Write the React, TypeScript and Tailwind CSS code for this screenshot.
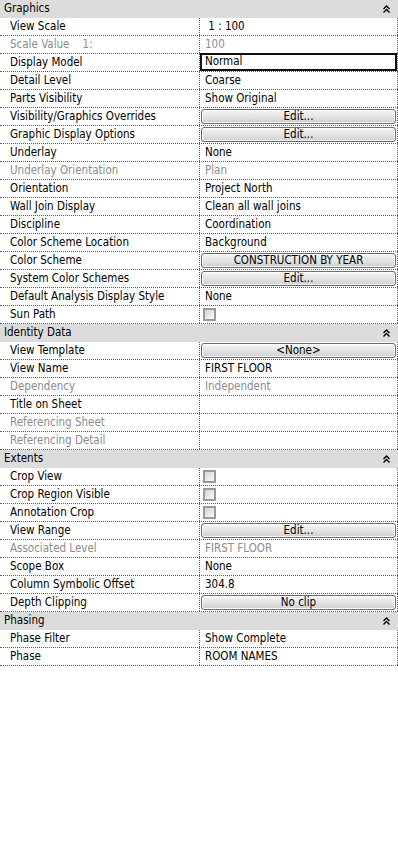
import { JSX } from "react";

type Row = {
  label: string;
  value?: string;
  kind?: "text" | "button" | "check" | "edit";
  disabled?: boolean;
};

type Section = { title: string; rows: Row[] };

const sections: Section[] = [
  {
    title: "Graphics",
    rows: [
      { label: "View Scale", value: " 1 : 100" },
      { label: "Scale Value    1:", value: "100", disabled: true },
      { label: "Display Model", value: "Normal", kind: "edit" },
      { label: "Detail Level", value: "Coarse" },
      { label: "Parts Visibility", value: "Show Original" },
      { label: "Visibility/Graphics Overrides", value: "Edit...", kind: "button" },
      { label: "Graphic Display Options", value: "Edit...", kind: "button" },
      { label: "Underlay", value: "None" },
      { label: "Underlay Orientation", value: "Plan", disabled: true },
      { label: "Orientation", value: "Project North" },
      { label: "Wall Join Display", value: "Clean all wall joins" },
      { label: "Discipline", value: "Coordination" },
      { label: "Color Scheme Location", value: "Background" },
      { label: "Color Scheme", value: "CONSTRUCTION BY YEAR", kind: "button" },
      { label: "System Color Schemes", value: "Edit...", kind: "button" },
      { label: "Default Analysis Display Style", value: "None" },
      { label: "Sun Path", kind: "check" },
    ],
  },
  {
    title: "Identity Data",
    rows: [
      { label: "View Template", value: "<None>", kind: "button" },
      { label: "View Name", value: "FIRST FLOOR" },
      { label: "Dependency", value: "Independent", disabled: true },
      { label: "Title on Sheet", value: "" },
      { label: "Referencing Sheet", value: "", disabled: true },
      { label: "Referencing Detail", value: "", disabled: true },
    ],
  },
  {
    title: "Extents",
    rows: [
      { label: "Crop View", kind: "check" },
      { label: "Crop Region Visible", kind: "check" },
      { label: "Annotation Crop", kind: "check" },
      { label: "View Range", value: "Edit...", kind: "button" },
      { label: "Associated Level", value: "FIRST FLOOR", disabled: true },
      { label: "Scope Box", value: "None" },
      { label: "Column Symbolic Offset", value: "304.8" },
      { label: "Depth Clipping", value: "No clip", kind: "button" },
    ],
  },
  {
    title: "Phasing",
    rows: [
      { label: "Phase Filter", value: "Show Complete" },
      { label: "Phase", value: "ROOM NAMES" },
    ],
  },
];

const Collapse = (): JSX.Element => (
  <svg width="7" height="8" viewBox="0 0 7 8" className="block">
    <path d="M0.5 4 L3.5 1 L6.5 4" fill="none" stroke="#000" strokeWidth="1.4" />
    <path d="M0.5 7.5 L3.5 4.5 L6.5 7.5" fill="none" stroke="#000" strokeWidth="1.4" />
  </svg>
);

const Value = ({ row }: { row: Row }): JSX.Element => {
  if (row.kind === "button") {
    return (
      <div className="h-full px-[1px] py-[1px]">
        <div className="h-full rounded-[3px] border border-[#6a6a6a] bg-gradient-to-b from-[#f6f6f6] via-[#e4e4e4] to-[#cfcfcf] shadow-[inset_0_0_0_1px_#fbfbfb] flex items-center justify-center text-black">
          {row.value}
        </div>
      </div>
    );
  }
  if (row.kind === "check") {
    return (
      <div className="h-full flex items-center pl-[3px]">
        <div className="w-[13px] h-[13px] border-2 border-[#999] bg-gradient-to-br from-[#d4d4d4] to-[#fbfbfb]" />
      </div>
    );
  }
  if (row.kind === "edit") {
    return (
      <div className="h-full">
        <div className="h-[18px] -mt-[1px] border-2 border-[#111] bg-white flex items-center pl-[3px] text-black">
          {row.value}
        </div>
      </div>
    );
  }
  return (
    <div
      className={`h-full flex items-center pl-[5px] whitespace-pre ${
        row.disabled ? "text-[#8c8c8c]" : "text-black"
      }`}
    >
      {row.value}
    </div>
  );
};

export default function App(): JSX.Element {
  return (
    <div
      className="w-[398px] min-h-[864px] bg-white text-[11.5px] leading-none font-stretch-condensed"
      style={{ fontFamily: '"DejaVu Sans Condensed", "DejaVu Sans", Tahoma, sans-serif' }}
    >
      {sections.map((s) => (
        <div key={s.title}>
          <div className="h-[18px] bg-[#dcdcdc] flex items-center justify-between pl-[4px] pr-[8px] text-black">
            <span>{s.title}</span>
            <Collapse />
          </div>
          {s.rows.map((r) => (
            <div
              key={r.label}
              className="h-[18px] flex border-b border-dotted border-[#5e5e5e]"
            >
              <div
                className={`w-[200px] shrink-0 border-r border-dotted border-[#5e5e5e] flex items-center pl-[10px] whitespace-pre ${
                  r.disabled ? "text-[#8c8c8c]" : "text-black"
                }`}
              >
                {r.label}
              </div>
              <div className="flex-1 border-r border-dotted border-[#5e5e5e]">
                <Value row={r} />
              </div>
            </div>
          ))}
        </div>
      ))}
    </div>
  );
}
